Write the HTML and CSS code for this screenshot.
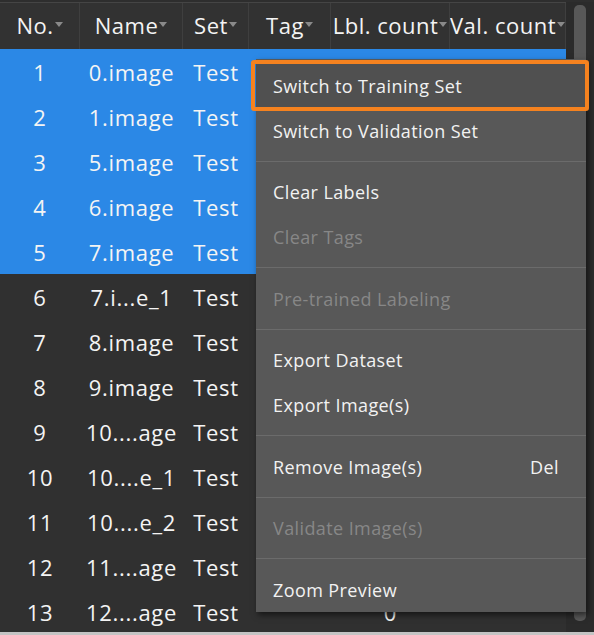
FILE: index.html
```html
<!DOCTYPE html>
<html lang="en">
<head>
    <meta charset="UTF-8">
    <title>Image List</title>
    <link rel="stylesheet" href="styles.css">
</head>
<body>

<!-- Image list table with scrollbar -->
<div class="list-panel">
    <div class="table">
        <div class="row head">
            <div class="cell">No.<span class="sort"></span></div>
            <div class="cell">Name<span class="sort"></span></div>
            <div class="cell">Set<span class="sort"></span></div>
            <div class="cell">Tag<span class="sort"></span></div>
            <div class="cell">Lbl. count<span class="sort"></span></div>
            <div class="cell">Val. count<span class="sort"></span></div>
        </div>
        <div class="row selected"><div class="cell">1</div><div class="cell">0.image</div><div class="cell">Test</div><div class="cell"></div><div class="cell"></div><div class="cell"></div></div>
        <div class="row selected"><div class="cell">2</div><div class="cell">1.image</div><div class="cell">Test</div><div class="cell"></div><div class="cell"></div><div class="cell"></div></div>
        <div class="row selected"><div class="cell">3</div><div class="cell">5.image</div><div class="cell">Test</div><div class="cell"></div><div class="cell"></div><div class="cell"></div></div>
        <div class="row selected"><div class="cell">4</div><div class="cell">6.image</div><div class="cell">Test</div><div class="cell"></div><div class="cell"></div><div class="cell"></div></div>
        <div class="row selected"><div class="cell">5</div><div class="cell">7.image</div><div class="cell">Test</div><div class="cell"></div><div class="cell"></div><div class="cell"></div></div>
        <div class="row"><div class="cell">6</div><div class="cell">7.i...e_1</div><div class="cell">Test</div><div class="cell"></div><div class="cell"></div><div class="cell"></div></div>
        <div class="row"><div class="cell">7</div><div class="cell">8.image</div><div class="cell">Test</div><div class="cell"></div><div class="cell"></div><div class="cell"></div></div>
        <div class="row"><div class="cell">8</div><div class="cell">9.image</div><div class="cell">Test</div><div class="cell"></div><div class="cell"></div><div class="cell"></div></div>
        <div class="row"><div class="cell">9</div><div class="cell">10....age</div><div class="cell">Test</div><div class="cell"></div><div class="cell"></div><div class="cell"></div></div>
        <div class="row"><div class="cell">10</div><div class="cell">10....e_1</div><div class="cell">Test</div><div class="cell"></div><div class="cell"></div><div class="cell"></div></div>
        <div class="row"><div class="cell">11</div><div class="cell">10....e_2</div><div class="cell">Test</div><div class="cell"></div><div class="cell"></div><div class="cell"></div></div>
        <div class="row"><div class="cell">12</div><div class="cell">11....age</div><div class="cell">Test</div><div class="cell"></div><div class="cell"></div><div class="cell"></div></div>
        <div class="row"><div class="cell">13</div><div class="cell">12....age</div><div class="cell">Test</div><div class="cell"></div><div class="cell">0</div><div class="cell"></div></div>
    </div>
    <div class="scrollbar"><div class="thumb"></div></div>
</div>
<div class="bottom-edge"></div>

<!-- Context menu -->
<div class="menu">
    <div class="item active">Switch to Training Set</div>
    <div class="item">Switch to Validation Set</div>
    <div class="sep"></div>
    <div class="item">Clear Labels</div>
    <div class="item disabled">Clear Tags</div>
    <div class="sep"></div>
    <div class="item disabled">Pre-trained Labeling</div>
    <div class="sep"></div>
    <div class="item">Export Dataset</div>
    <div class="item">Export Image(s)</div>
    <div class="sep"></div>
    <div class="item">Remove Image(s)<span class="shortcut">Del</span></div>
    <div class="sep"></div>
    <div class="item disabled">Validate Image(s)</div>
    <div class="sep"></div>
    <div class="item">Zoom Preview</div>
</div>

<!-- Highlight frame around the first menu item -->
<div class="focus-ring"></div>

</body>
</html>
```

FILE: styles.css
```css
body {
    margin: 0;
    background-color: #2c2c2c;
    font-family: 'Open Sans', sans-serif;
    color: #f4f4f4;
    width: 594px;
    height: 635px;
    overflow: hidden;
}

/* Table panel */
.list-panel {
    display: flex;
    height: 632px;
    padding-top: 2px;
    box-sizing: border-box;
    background-color: #2e2e2e;
    overflow: hidden;
}

.table {
    width: 566px;
    flex: none;
}

.row {
    display: grid;
    grid-template-columns: 80px 103px 66px 82px 119px 116px;
    height: 45px;
    font-size: 22px;
    letter-spacing: 0.7px;
    background-color: #303030;
}

.row .cell {
    display: flex;
    align-items: center;
    justify-content: center;
    white-space: nowrap;
    overflow: hidden;
}

.row.selected {
    background-color: #2b88e6;
}

/* Header */
.row.head {
    height: 46px;
    font-size: 22px;
    letter-spacing: 0.5px;
    background-color: #323232;
    border-top: 1px solid #454545;
}

.row.head .cell {
    border-right: 1px solid #3f3f3f;
    padding-bottom: 3px;
}

.sort {
    display: inline-block;
    width: 0;
    height: 0;
    margin-left: 1px;
    border-left: 4px solid transparent;
    border-right: 4px solid transparent;
    border-top: 5px solid #8a8a8a;
}

/* Scrollbar */
.scrollbar {
    flex: 1;
    background-color: #2b2b2b;
    padding: 3px 0 0 8px;
}

.thumb {
    width: 12px;
    height: 616px;
    border-radius: 5px;
    background-color: #585858;
}

.bottom-edge {
    height: 3px;
    background-color: #c4c4c4;
}

/* Context menu */
.menu {
    position: absolute;
    left: 256px;
    top: 59px;
    width: 330px;
    padding-top: 4px;
    background-color: #585858;
    box-shadow: 2px 3px 6px rgba(0, 0, 0, 0.55);
    font-size: 18px;
    letter-spacing: 0.4px;
}

.item {
    height: 45px;
    display: flex;
    align-items: center;
    justify-content: space-between;
    padding: 0 27px 0 17px;
    color: #f2f2f2;
}

.item.active {
    background-color: #505050;
}

.item.disabled {
    color: #878787;
}

.sep {
    height: 1px;
    margin: 7.75px 0;
    background-color: #6b6b6b;
}

.focus-ring {
    position: absolute;
    left: 251px;
    top: 60px;
    width: 338px;
    height: 51px;
    box-sizing: border-box;
    border: 4px solid #f5821f;
    border-radius: 3px;
}
```
